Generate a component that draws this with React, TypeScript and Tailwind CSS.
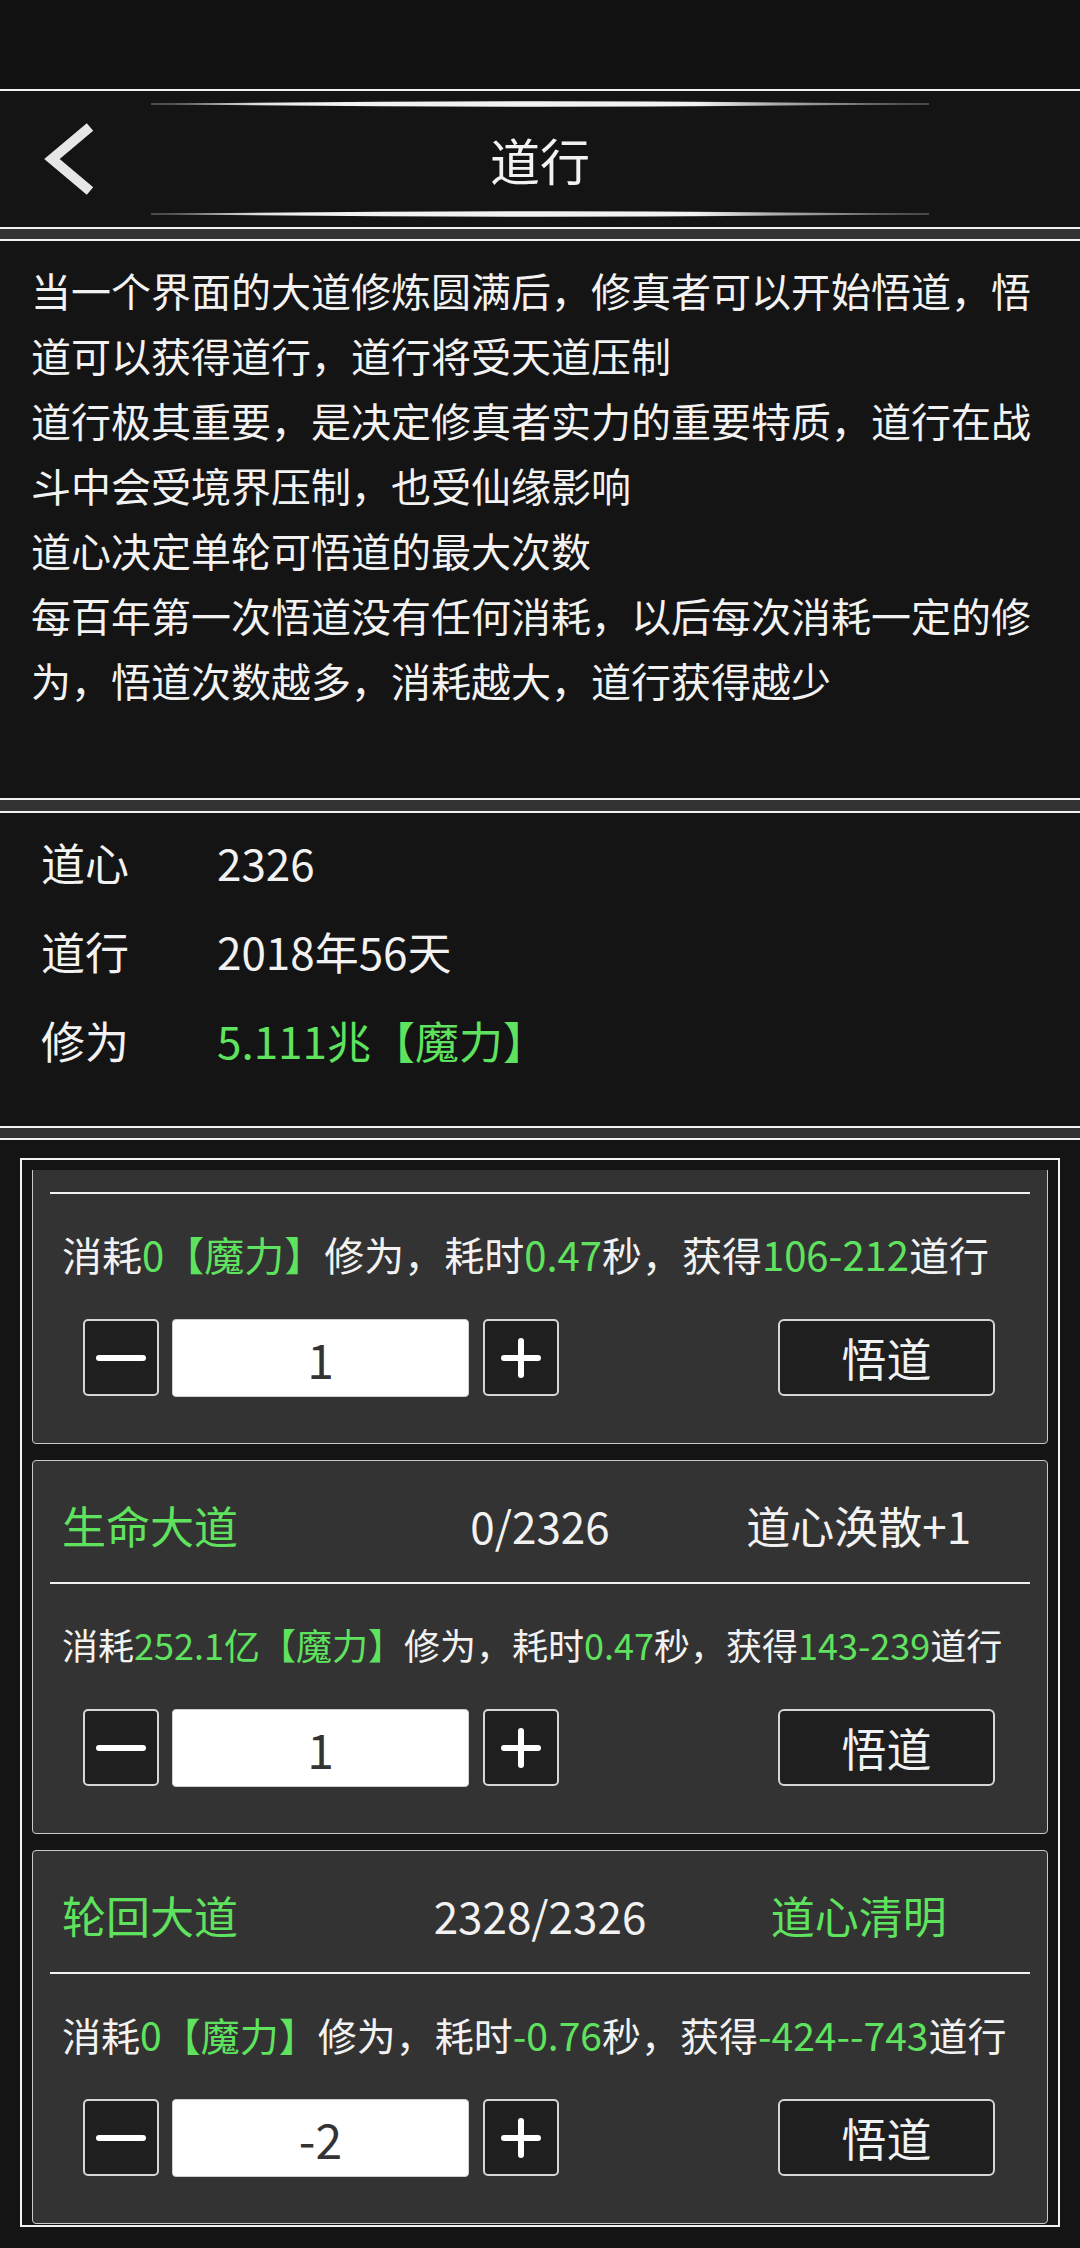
import type { ReactNode } from 'react';

const FONT = { fontFamily: '"Noto Sans CJK SC", "Noto Sans", sans-serif' };

const G = ({ children }: { children: ReactNode }) => (
  <span className="text-[#5fe35f]">{children}</span>
);

interface DaoCardProps {
  title: string;
  progress: string;
  status: string;
  statusGreen?: boolean;
  cost: ReactNode;
  costSize: string;
  value: string;
}

function Gap() {
  return <div className="h-[10px] bg-[#333333]" />;
}

function DaoCard({ title, progress, status, statusGreen, cost, costSize, value }: DaoCardProps) {
  return (
    <div className="flex h-[374px] flex-col rounded-[4px] border border-[#c8c8c8] bg-[#333333]">
      <div className="grid h-[121px] grid-cols-3 items-center px-[29px] pt-[6px] text-[44px] leading-none">
        <span className="text-[#5fe35f]">{title}</span>
        <span className="text-center text-[#f2f2f2]">{progress}</span>
        <span className={`text-center ${statusGreen ? 'text-[#5fe35f]' : 'text-[#f2f2f2]'}`}>{status}</span>
      </div>
      <div className="mx-[17px] h-[2px] bg-[#f2f2f2]" />
      <div className={`flex h-[120px] items-center whitespace-nowrap pl-[29px] leading-none text-[#f2f2f2] ${costSize}`}>
        {cost}
      </div>
      <div className="mt-[5px] flex h-[77px] items-center pl-[50px] pr-[52px]">
        <button className="flex h-[77px] w-[76px] items-center justify-center rounded-[5px] border-2 border-[#d6d6d6] bg-[#1f1f1f]">
          <span className="block h-[6px] w-[50px] rounded-full bg-white" />
        </button>
        <div className="ml-[13px] flex h-[78px] w-[297px] items-center justify-center rounded-[4px] border border-[#cfcfcf] bg-white text-[48px] leading-none text-[#333333]">
          {value}
        </div>
        <button className="ml-[14px] flex h-[77px] w-[76px] items-center justify-center rounded-[5px] border-2 border-[#d6d6d6] bg-[#1f1f1f]">
          <svg width="40" height="40" viewBox="0 0 40 40">
            <path d="M3 20 H37 M20 3 V37" stroke="#ffffff" strokeWidth="6" strokeLinecap="round" />
          </svg>
        </button>
        <button className="ml-auto flex h-[77px] w-[217px] items-center justify-center rounded-[6px] border-2 border-[#d6d6d6] bg-[#1f1f1f] text-[45px] leading-none text-[#f2f2f2]">
          悟道
        </button>
      </div>
    </div>
  );
}

// tapered light streak above / below the title
function GlowLine({ id }: { id: string }) {
  return (
    <svg width="778" height="8" viewBox="0 0 778 8" className="block">
      <defs>
        <linearGradient id={id} x1="0" x2="1" y1="0" y2="0">
          <stop offset="0" stopColor="#f2f2f2" stopOpacity="0.05" />
          <stop offset="0.14" stopColor="#f2f2f2" stopOpacity="0.9" />
          <stop offset="0.2" stopColor="#f2f2f2" />
          <stop offset="0.7" stopColor="#f2f2f2" />
          <stop offset="0.8" stopColor="#f2f2f2" stopOpacity="0.6" />
          <stop offset="1" stopColor="#f2f2f2" stopOpacity="0.05" />
        </linearGradient>
      </defs>
      <rect x="0" y="3" width="778" height="2" fill="#4a4a4a" />
      <path d="M0 4 Q 389 -1.5 778 4 Q 389 9.5 0 4 Z" fill={`url(#${id})`} />
    </svg>
  );
}

export default function App() {
  return (
    <div className="min-h-[2248px] w-[1080px] bg-[#121212] text-[#f2f2f2]" style={FONT}>
      <div className="h-[89px] bg-[#121212]" />

      {/* header */}
      <div className="border-y-2 border-[#f2f2f2] bg-[#141414]">
        <div className="grid h-[136px] grid-cols-[151px_778px_151px]">
          <div className="flex items-center pl-[40px]">
            <svg width="56" height="84" viewBox="0 0 56 84" fill="none">
              <path d="M50 10 L12 42 L50 74" stroke="#e6e6e6" strokeWidth="10" strokeLinejoin="miter" />
            </svg>
          </div>
          <div className="flex flex-col items-center justify-between py-[9px]">
            <GlowLine id="glow-top" />
            <span className="text-[50px] leading-none">道行</span>
            <GlowLine id="glow-bottom" />
          </div>
          <div />
        </div>
      </div>

      <Gap />

      {/* description */}
      <div className="border-y-2 border-[#f2f2f2] bg-[#141414]">
        <div className="h-[557px] pl-[31px] pr-[18px] pt-[17px] text-[40px] leading-[65px]">
          <p>当一个界面的大道修炼圆满后，修真者可以开始悟道，悟道可以获得道行，道行将受天道压制</p>
          <p>道行极其重要，是决定修真者实力的重要特质，道行在战斗中会受境界压制，也受仙缘影响</p>
          <p>道心决定单轮可悟道的最大次数</p>
          <p>每百年第一次悟道没有任何消耗，以后每次消耗一定的修为，悟道次数越多，消耗越大，道行获得越少</p>
        </div>
      </div>

      <div className="h-[11px] bg-[#333333]" />

      {/* stats */}
      <div className="border-y-2 border-[#f2f2f2] bg-[#141414]">
        <div className="h-[313px] pl-[41px] pt-[4px] text-[44px] leading-none">
          <div className="flex h-[89px] items-center">
            <span className="w-[176px]">道心</span>
            <span>2326</span>
          </div>
          <div className="flex h-[89px] items-center">
            <span className="w-[176px]">道行</span>
            <span>2018年56天</span>
          </div>
          <div className="flex h-[89px] items-center">
            <span className="w-[176px]">修为</span>
            <G>5.111兆【魔力】</G>
          </div>
        </div>
      </div>

      <Gap />

      {/* dao list, scrolled so the first card's header is out of view */}
      <div className="border-t-2 border-[#f2f2f2] bg-[#141414] pb-[20px] pt-[18px]">
        <div className="mx-[20px] border-2 border-[#f2f2f2] px-[10px] pt-[10px]">
          <div className="h-[1055px] overflow-hidden">
            <div className="-mt-[100px] flex flex-col gap-[16px]">
              <DaoCard
                title=""
                progress=""
                status=""
                costSize="text-[40px]"
                value="1"
                cost={
                  <>
                    消耗<G>0【魔力】</G>修为，耗时<G>0.47</G>秒，获得<G>106-212</G>道行
                  </>
                }
              />
              <DaoCard
                title="生命大道"
                progress="0/2326"
                status="道心涣散+1"
                costSize="text-[36px]"
                value="1"
                cost={
                  <>
                    消耗<G>252.1亿【魔力】</G>修为，耗时<G>0.47</G>秒，获得<G>143-239</G>道行
                  </>
                }
              />
              <DaoCard
                title="轮回大道"
                progress="2328/2326"
                status="道心清明"
                statusGreen
                costSize="text-[39px]"
                value="-2"
                cost={
                  <>
                    消耗<G>0【魔力】</G>修为，耗时<G>-0.76</G>秒，获得<G>-424--743</G>道行
                  </>
                }
              />
            </div>
          </div>
        </div>
      </div>
    </div>
  );
}
